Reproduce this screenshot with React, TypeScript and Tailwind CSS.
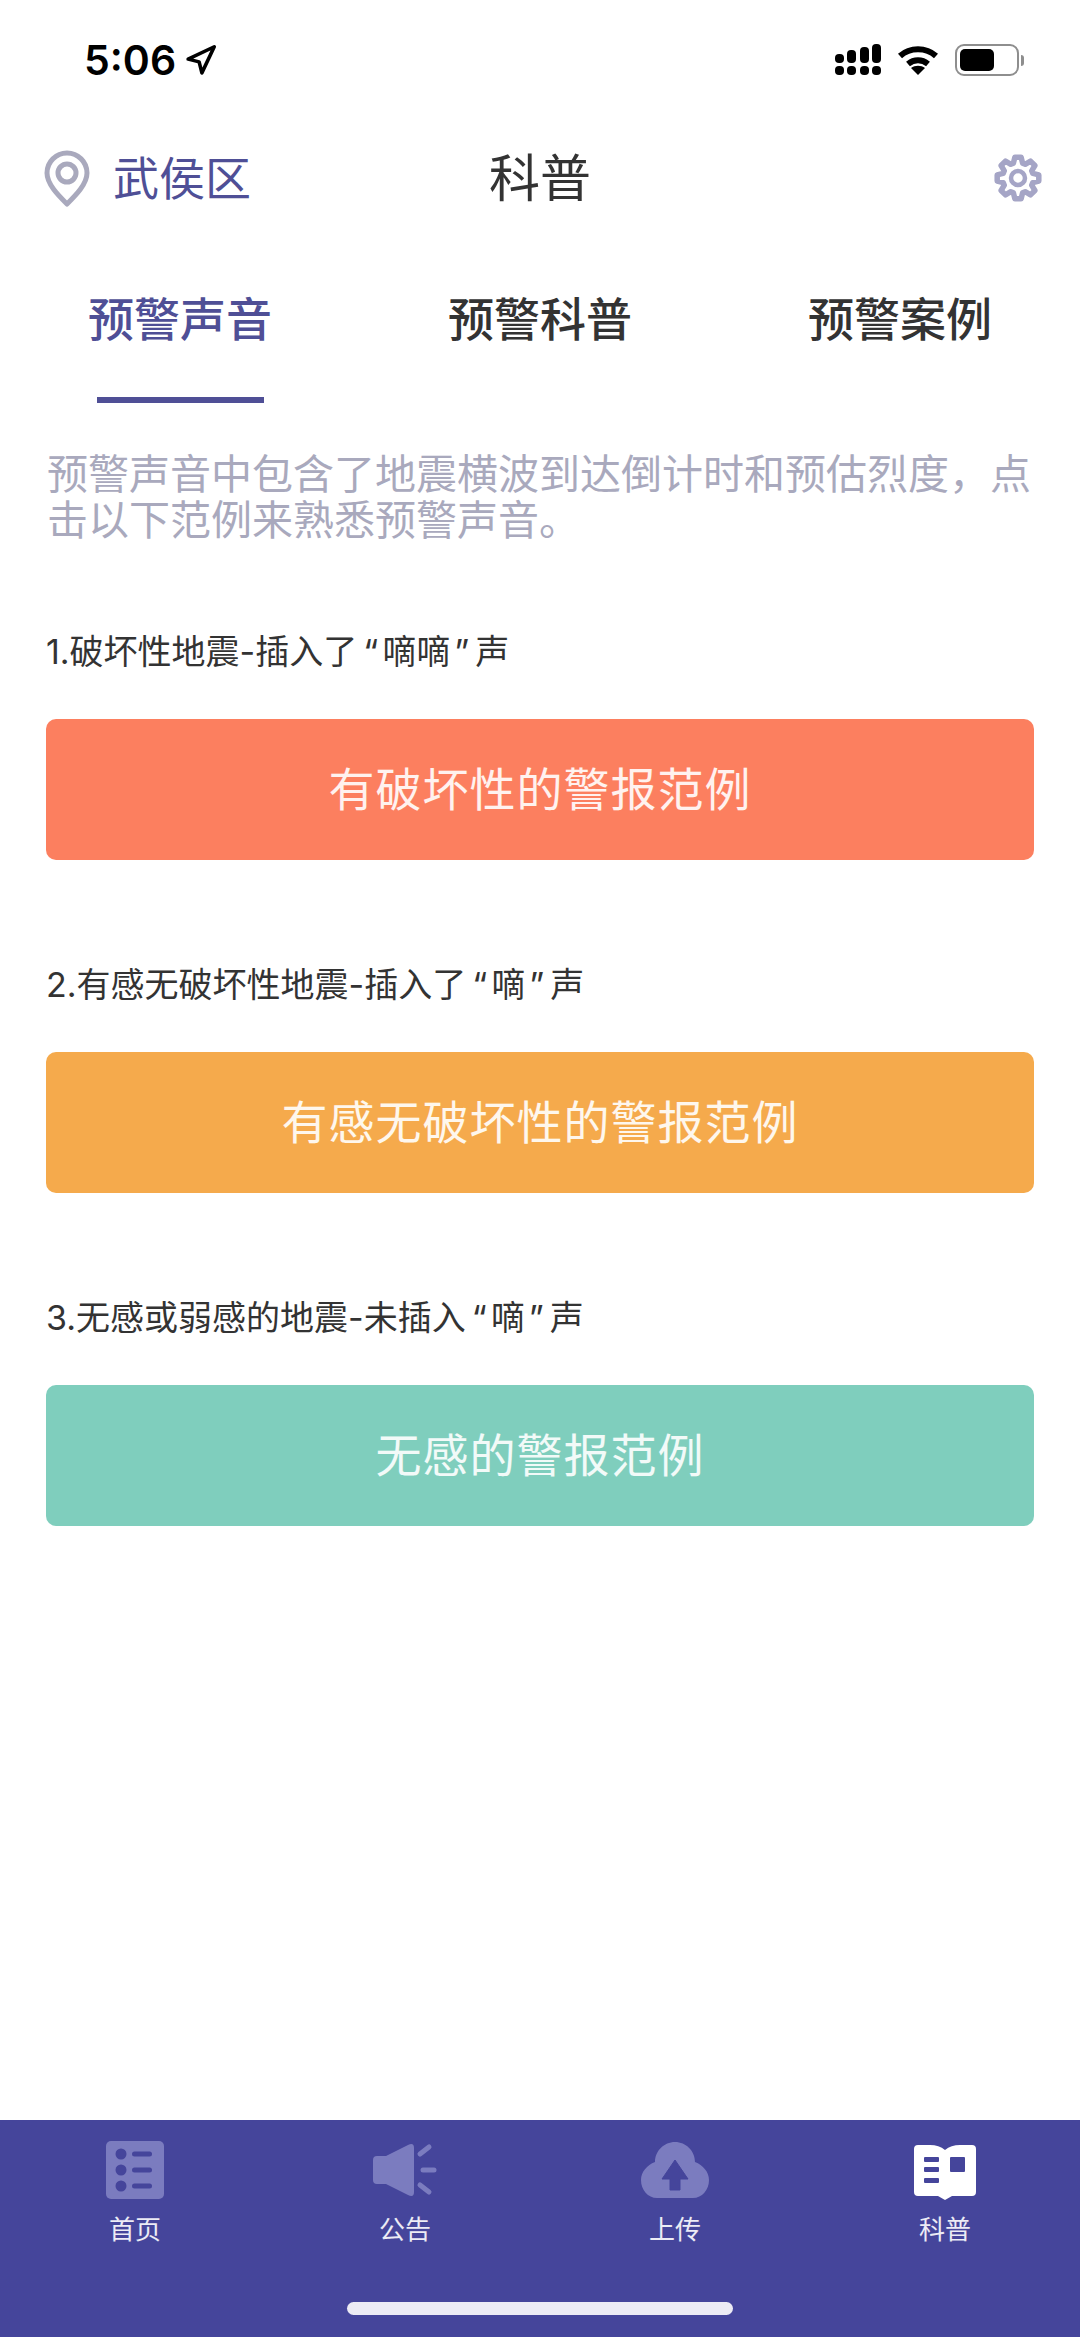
import { Navigation } from "lucide-react";

const cjk = "font-['Inter','Noto_Sans_CJK_SC',sans-serif]";

const examples = [
  { before: "1.破坏性地震-插入了", quoted: "嘀嘀", after: "声", text: "有破坏性的警报范例", color: "bg-[#fc7f5f]" },
  { before: "2.有感无破坏性地震-插入了", quoted: "嘀", after: "声", text: "有感无破坏性的警报范例", color: "bg-[#f5aa4c]" },
  { before: "3.无感或弱感的地震-未插入", quoted: "嘀", after: "声", text: "无感的警报范例", color: "bg-[#7fcebd]" },
];

// 8 tooth gear outline, centre 24,24
const gearPoints = Array.from({ length: 8 }, (_, i) => {
  const a = (i * Math.PI) / 4 - Math.PI / 2;
  const at = (r: number, d: number) =>
    `${(24 + r * Math.cos(a + d)).toFixed(1)} ${(24 + r * Math.sin(a + d)).toFixed(1)}`;
  return [at(15.5, -0.3), at(21, -0.15), at(21, 0.15), at(15.5, 0.3)].join(" L");
}).join(" L");

const GearIcon = () => (
  <svg width="48" height="48" viewBox="0 0 48 48" fill="none" stroke="#a5a5c6" strokeLinejoin="round" className="mb-[2px]">
    <path d={`M${gearPoints}Z`} strokeWidth="5.5" />
    <circle cx="24" cy="24" r="7" strokeWidth="4.5" />
  </svg>
);

const SignalIcon = () => (
  <svg width="46" height="32" viewBox="0 0 46 32" fill="#000">
    <rect x="0" y="10" width="9" height="9" rx="4" />
    <rect x="12" y="6" width="9" height="13" rx="4" />
    <rect x="25" y="3" width="9" height="16" rx="4" />
    <rect x="37" y="0" width="9" height="19" rx="4" />
    <rect x="0" y="22" width="9" height="9" rx="4" />
    <rect x="12" y="22" width="9" height="9" rx="4" />
    <rect x="25" y="22" width="9" height="9" rx="4" />
    <rect x="37" y="22" width="9" height="9" rx="4" />
  </svg>
);

const WifiIcon = () => (
  <svg width="42" height="32" viewBox="0 0 42 32" fill="none" stroke="#000" strokeWidth="6">
    <path d="M3 12C13 3 29 3 39 12" />
    <path d="M11 20C17 15 25 15 31 20" />
    <path d="M21 31l-7-7c4-3 10-3 14 0z" fill="#000" stroke="none" />
  </svg>
);

const BatteryIcon = () => (
  <div className="flex items-center gap-[2px]">
    <div className="w-[64px] h-[32px] rounded-[9px] border-[2px] border-[#8e8e8e] p-[3px]">
      <div className="w-[34px] h-full rounded-[5px] bg-black" />
    </div>
    <div className="w-[3px] h-[11px] rounded-r-full bg-[#8e8e8e]" />
  </div>
);

const PinIcon = () => (
  <svg width="46" height="58" viewBox="0 0 46 58" fill="none" stroke="#a9a9bd">
    <path d="M23 54C14 45 3 34 3 23a20 20 0 0 1 40 0C43 34 32 45 23 54z" strokeWidth="5" strokeLinejoin="round" />
    <circle cx="23" cy="23" r="9" strokeWidth="5" />
  </svg>
);

const HomeTab = () => (
  <svg width="58" height="58" viewBox="0 0 58 58">
    <rect width="58" height="58" rx="5" fill="#7b7cbf" />
    <g fill="#45459b">
      <circle cx="15" cy="13" r="5.5" />
      <circle cx="15" cy="29" r="5.5" />
      <circle cx="15" cy="45" r="5.5" />
      <rect x="26" y="10.5" width="20" height="5" rx="2.5" />
      <rect x="26" y="26.5" width="20" height="5" rx="2.5" />
      <rect x="26" y="42.5" width="20" height="5" rx="2.5" />
    </g>
  </svg>
);

const SpeakerTab = () => (
  <svg width="64" height="54" viewBox="0 0 64 54" fill="#7b7cbf">
    <path d="M0 17q0-4 4-4h9L35 2q6-3 6 3v44q0 6-6 3L13 41H4q-4 0-4-4z" />
    <g stroke="#7b7cbf" strokeWidth="5" strokeLinecap="round">
      <path d="M56 4l-9 7" />
      <path d="M50 27h11" />
      <path d="M47 42l9 7" />
    </g>
  </svg>
);

const UploadTab = () => (
  <svg width="68" height="56" viewBox="0 0 68 56">
    <path d="M34 0c11 0 20 9 20 20 8 3 14 10 14 18 0 10-7 18-16 18H16C7 56 0 48 0 38c0-8 6-15 14-18C14 9 23 0 34 0z" fill="#7b7cbf" />
    <path d="M34 18l13 19h-8v11H29V37h-8z" fill="#45459b" strokeLinejoin="round" stroke="#45459b" strokeWidth="1" />
  </svg>
);

const BookTab = () => (
  <svg width="64" height="60" viewBox="0 -5 64 60">
    <path d="M5 0h12q9 0 15 5q6-5 15-5h12q4 0 4 4v43q0 4-4 4H39l-7 4-7-4H5q-4 0-4-4V4q0-4 4-4z" fill="#fff" />
    <g fill="#45459b">
      <rect x="11" y="12" width="15" height="5" rx="1" />
      <rect x="11" y="22" width="15" height="5" rx="1" />
      <rect x="11" y="33" width="15" height="5" rx="1" />
      <rect x="37" y="12" width="15" height="15" rx="1" />
    </g>
  </svg>
);

const tabs = [
  { label: "首页", icon: <HomeTab /> },
  { label: "公告", icon: <SpeakerTab /> },
  { label: "上传", icon: <UploadTab /> },
  { label: "科普", icon: <BookTab /> },
];

export default function App() {
  return (
    <div className={`w-[1080px] h-[2337px] flex flex-col bg-white overflow-hidden ${cjk}`}>
      <div className="h-[120px] flex items-center justify-between pl-[84px] pr-[56px] shrink-0">
        <div className="flex items-center gap-[8px] text-black">
          <span className="text-[41px] font-semibold leading-none">5:06</span>
          <Navigation size={33} strokeWidth={2.6} />
        </div>
        <div className="flex items-center gap-[16px]">
          <SignalIcon />
          <WifiIcon />
          <BatteryIcon />
        </div>
      </div>

      <div className="h-[118px] flex items-center justify-between pl-[44px] pr-[38px] relative shrink-0">
        <div className="flex items-center gap-[23px]">
          <PinIcon />
          <span className="text-[46px] leading-[58px] pb-[2px] text-[#4f4f96]">武侯区</span>
        </div>
        <span className="absolute left-[489px] text-[51px] text-[#333333]">科普</span>
        <GearIcon />
      </div>

      <div className="grid grid-cols-3 shrink-0">
        <div className="h-[165px] flex flex-col items-center justify-between pt-[52px]">
          <span className="text-[46px] font-medium leading-[58px] text-[#4f4f96]">预警声音</span>
          <div className="w-[167px] h-[6px] bg-[#4f4f96]" />
        </div>
        <div className="h-[165px] pt-[52px] text-center">
          <span className="text-[46px] font-medium leading-[58px] text-[#333333]">预警科普</span>
        </div>
        <div className="h-[165px] pt-[52px] text-center">
          <span className="text-[46px] font-medium leading-[58px] text-[#333333]">预警案例</span>
        </div>
      </div>

      <p className="mt-[48px] pl-[47px] text-[41px] leading-[46px] text-[#a9a9bd] whitespace-nowrap">
        预警声音中包含了地震横波到达倒计时和预估烈度，点
        <br />
        击以下范例来熟悉预警声音。
      </p>

      <div className="mt-[85px] px-[46px] flex flex-col gap-[101px]">
        {examples.map((item) => (
          <div key={item.text}>
            <p className="text-[34px] leading-[48px] text-[#333333] whitespace-nowrap">
              {item.before}
              <span className="pl-[6px] pr-[4px]">“</span>
              {item.quoted}
              <span className="pl-[4px] pr-[6px]">”</span>
              {item.after}
            </p>
            <div
              className={`mt-[43px] h-[141px] rounded-[10px] flex items-center justify-center text-[46px] text-white/90 tracking-[1px] ${item.color}`}
            >
              {item.text}
            </div>
          </div>
        ))}
      </div>

      <div className="mt-auto h-[217px] bg-[#45459b] relative">
        <div className="grid grid-cols-4 pt-[20px]">
          {tabs.map((tab) => (
            <div key={tab.label} className="flex flex-col items-center">
              <div className="h-[60px] flex items-center justify-center">{tab.icon}</div>
              <span className="mt-[12px] text-[26px] leading-[36px] text-white/90">{tab.label}</span>
            </div>
          ))}
        </div>
        <div className="absolute left-[347px] bottom-[22px] w-[386px] h-[13px] rounded-full bg-[#ecebf5]" />
      </div>
    </div>
  );
}
